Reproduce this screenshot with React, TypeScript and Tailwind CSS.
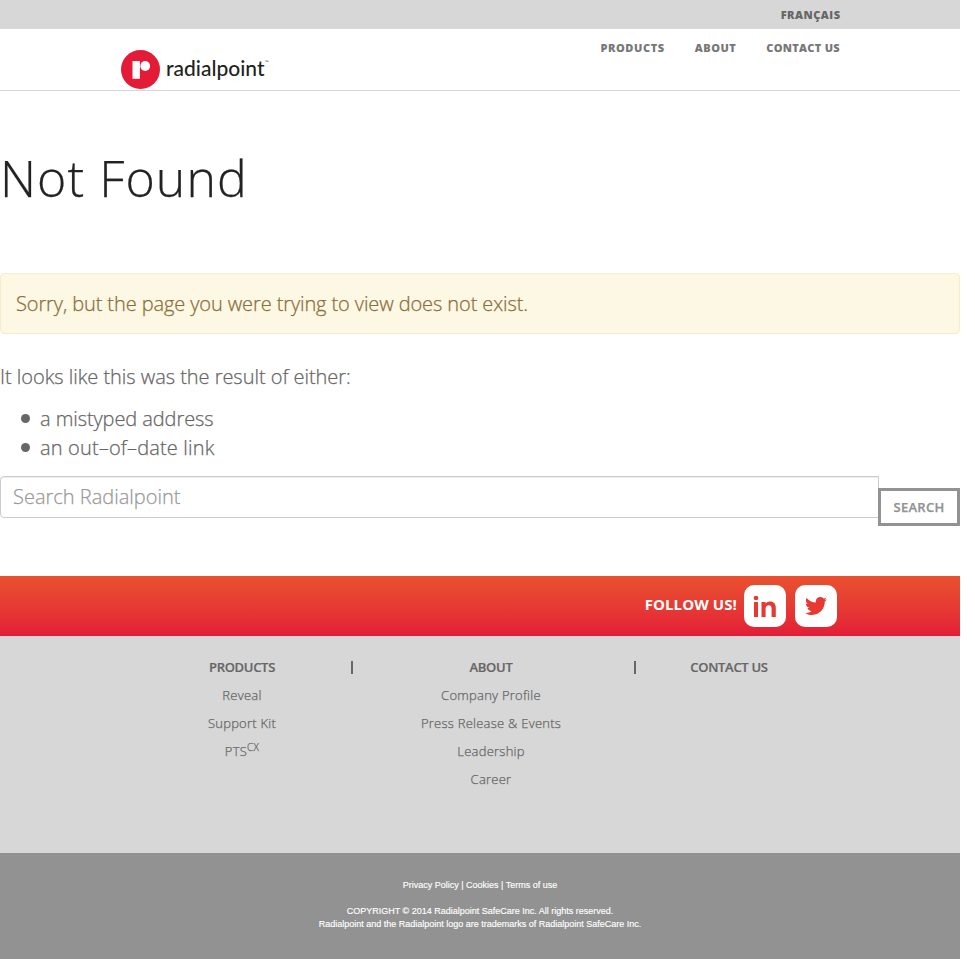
import { FaTwitter } from "react-icons/fa";

function Logo() {
  return (
    <a className="mt-[21px] flex h-[39px] items-start">
      <svg width="39" height="39" viewBox="0 0 39 39" className="shrink-0">
        <circle cx="19.5" cy="19.5" r="19.5" fill="#e31b37" />
        <path d="M11.5 11h7.4v17.8h-7.4z" fill="#fff" />
        <circle cx="24.2" cy="16" r="4.9" fill="#fff" />
      </svg>
      <span className="ml-[6px] whitespace-nowrap font-['Lato','Liberation_Sans',sans-serif] text-[21px] font-medium leading-[36px] text-[#231f20]">
        radialpoint
      </span>
      <span className="mt-[9px] font-['Liberation_Sans',sans-serif] text-[4px] leading-[6px] text-[#231f20]">™</span>
    </a>
  );
}

function FooterColumn({ title, items, className }: { title: string; items: React.ReactNode[]; className: string }) {
  return (
    <div className={`flex flex-col items-center whitespace-nowrap text-[13px] leading-[28px] ${className}`}>
      <h2 className="text-[13px] font-semibold tracking-[-0.3px] [-webkit-text-stroke:0.2px]">{title}</h2>
      {items.map((item, i) => (
        <a key={i} className="font-light tracking-[0.25px] [-webkit-text-stroke:0.25px]">{item}</a>
      ))}
    </div>
  );
}

export default function App() {
  return (
    <div className="min-h-[959px] bg-white">
      <div className="w-[960px] font-['Open_Sans','Noto_Sans',sans-serif] text-[#666]">
        <div className="flex h-[29px] justify-end bg-[#d7d7d7] pr-[120px] text-[11px] font-extrabold leading-[30px] tracking-[0.5px]">
          <a className="-mr-[0.5px]">FRANÇAIS</a>
        </div>
        <header className="flex h-[62px] justify-between border-b border-[#d7d7d7] pl-[121px] pr-[120px]">
          <Logo />
          <nav className="flex gap-[30px] text-[11px] font-extrabold leading-[38px] text-[#777]">
            <a className="tracking-[0.6px]">PRODUCTS</a>
            <a className="tracking-[0.5px]">ABOUT</a>
            <a className="tracking-[0.3px]">CONTACT US</a>
          </nav>
        </header>

        <main className="h-[485px] text-[20px] font-light leading-[29px] tracking-[-0.04px] [-webkit-text-stroke:0.25px]">
          <h1 className="h-[182px] pt-[52px] text-[50px] leading-[70px] tracking-[1.05px] text-[#222]">Not Found</h1>
          <div className="h-[61px] rounded-[4px] border border-[#faebcc] bg-[#fcf8e3] px-[15px] pt-[15px] tracking-[-0.1px] text-[#8a6d3b]">
            Sorry, but the page you were trying to view does not exist.
          </div>
          <p className="mt-[28px]">It looks like this was the result of either:</p>
          <ul className="mt-[13px]">
            <li className="flex items-center">
              <span className="ml-[21px] mr-[10px] size-[9px] rounded-full bg-[#666]" />
              <span className="tracking-[-0.08px]">a mistyped address</span>
            </li>
            <li className="flex items-center">
              <span className="ml-[21px] mr-[10px] size-[9px] rounded-full bg-[#666]" />
              <span className="tracking-[0.16px]">an out–of–date link</span>
            </li>
          </ul>
          <form className="mt-[14px] flex items-start">
            <div className="h-[42px] w-[879px] rounded-l-[4px] border border-[#ccc] pl-[12px] pt-[5px] tracking-normal text-[#999] shadow-[inset_0_1px_1px_rgba(0,0,0,0.075)]">
              Search Radialpoint
            </div>
            <button type="button" className="-ml-px mt-[12px] h-[38px] w-[82px] border-[3px] border-[#929292] text-[13px] font-semibold leading-[32px] tracking-[0.3px] text-[#929292]">
              SEARCH
            </button>
          </form>
        </main>

        <section className="flex h-[60px] items-start justify-end bg-linear-to-b from-[#e9502e] to-[#e31b37] pr-[123px] pt-[9px] text-white">
          <span className="mr-[7px] text-[15px] font-bold leading-[38px] tracking-[0.1px]">FOLLOW US!</span>
          <a className="mr-[9px] flex size-[42px] items-center justify-center rounded-[10px] bg-white">
            <svg width="24" height="24" viewBox="0 0 24 24" fill="#e73832">
              <circle cx="3" cy="4" r="2.3" />
              <path d="M1 8h4v15H1zM8.5 8h4v1.8c1-1.5 2.5-2.2 4.4-2.2 4.2 0 5.9 2.4 5.9 6.3V23h-4.2v-8.1c0-2.5-.8-3.7-2.7-3.7-2.3 0-3.3 1.4-3.3 3.9V23H8.5z" />
            </svg>
          </a>
          <a className="flex size-[42px] items-center justify-center rounded-[10px] bg-white">
            <FaTwitter size={22} color="#e73832" />
          </a>
        </section>

        <footer>
          <div className="flex h-[217px] bg-[#d7d7d7] pt-[17px]">
            <FooterColumn className="ml-[142px] w-[200px]" title="PRODUCTS" items={["Reveal", "Support Kit", <>PTS<sup className="text-[10px]">CX</sup></>]} />
            <div className="ml-[9px] mt-[8px] h-[13px] w-[2px] bg-[#666]" />
            <FooterColumn className="ml-[38px] w-[200px]" title="ABOUT" items={["Company Profile", "Press Release & Events", "Leadership", "Career"]} />
            <div className="ml-[43px] mt-[8px] h-[13px] w-[2px] bg-[#666]" />
            <FooterColumn className="ml-[-7px] w-[200px]" title="CONTACT US" items={[]} />
          </div>
          <div className="h-[106px] bg-[#929292] pt-[26px] text-center font-['Liberation_Sans',Arial,sans-serif] text-[9px] leading-[13px] text-white [-webkit-text-stroke:0.15px]">
            <p>Privacy Policy | Cookies | Terms of use</p>
            <p className="mt-[13px]">COPYRIGHT © 2014 Radialpoint SafeCare Inc. All rights reserved.</p>
            <p>Radialpoint and the Radialpoint logo are trademarks of Radialpoint SafeCare Inc.</p>
          </div>
        </footer>
      </div>
    </div>
  );
}
